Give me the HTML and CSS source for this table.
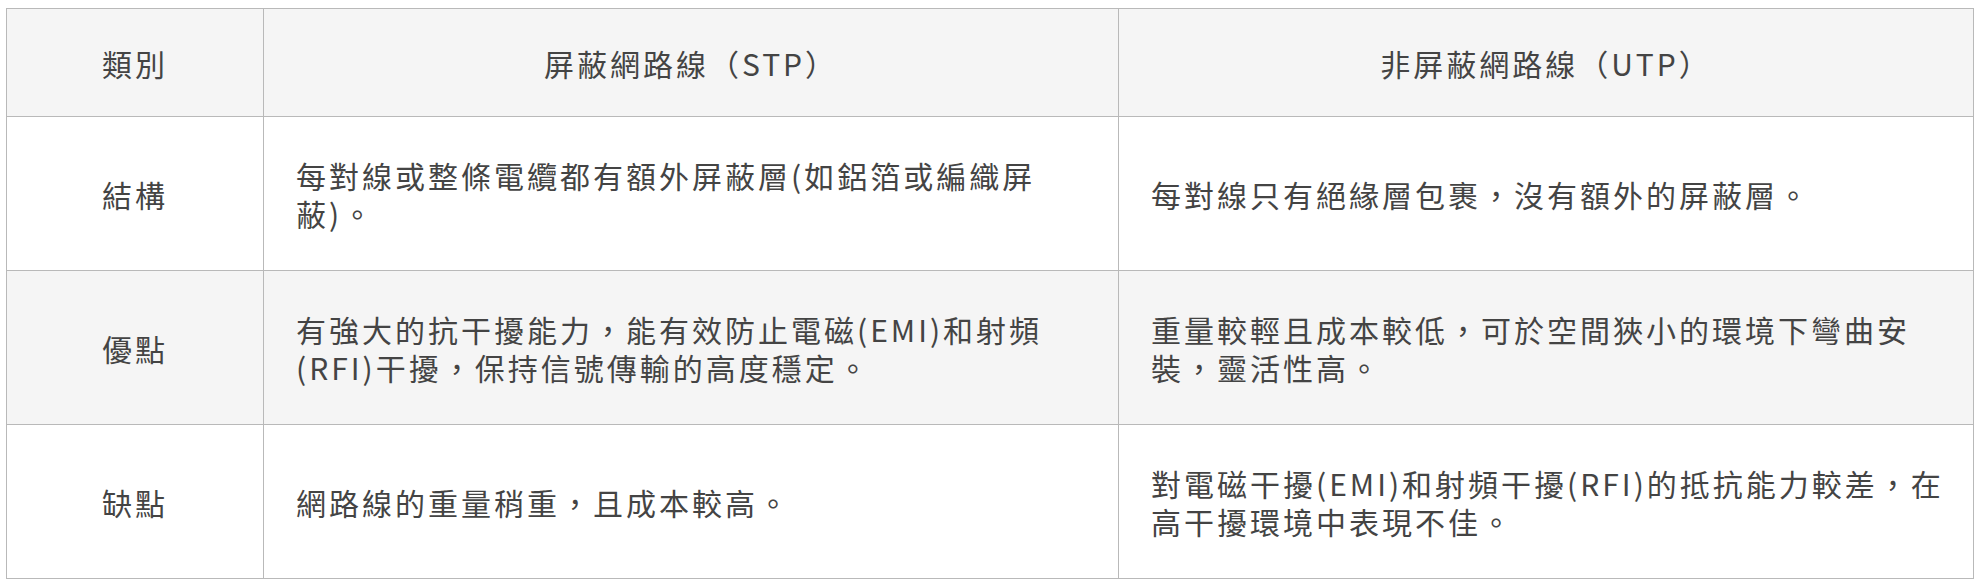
FILE: index.html
```html
<!DOCTYPE html>
<html lang="zh-Hant">
<head>
<meta charset="utf-8">
<title>STP vs UTP</title>
<link rel="stylesheet" href="styles.css">
</head>
<body>
<div class="wrap">
  <table class="cmp">
    <colgroup>
      <col class="col-cat">
      <col class="col-a">
      <col class="col-b">
    </colgroup>
    <thead>
      <tr class="head">
        <th>類別</th>
        <th>屏蔽網路線（STP）</th>
        <th>非屏蔽網路線（UTP）</th>
      </tr>
    </thead>
    <tbody>
      <tr class="odd">
        <td class="cat">結構</td>
        <td>每對線或整條電纜都有額外屏蔽層(如鋁箔或編織屏蔽)。</td>
        <td>每對線只有絕緣層包裹，沒有額外的屏蔽層。</td>
      </tr>
      <tr class="even">
        <td class="cat">優點</td>
        <td>有強大的抗干擾能力，能有效防止電磁(EMI)和射頻(RFI)干擾，保持信號傳輸的高度穩定。</td>
        <td>重量較輕且成本較低，可於空間狹小的環境下彎曲安裝，靈活性高。</td>
      </tr>
      <tr class="odd">
        <td class="cat">缺點</td>
        <td>網路線的重量稍重，且成本較高。</td>
        <td>對電磁干擾(EMI)和射頻干擾(RFI)的抵抗能力較差，在高干擾環境中表現不佳。</td>
      </tr>
    </tbody>
  </table>
</div>
</body>
</html>
```

FILE: styles.css
```css
html, body {
  margin: 0;
  padding: 0;
  background: #ffffff;
}

.wrap {
  padding: 8px 8px 0 6px;
}

.cmp {
  width: 100%;
  border-collapse: collapse;
  table-layout: fixed;
  font-family: "Noto Sans CJK TC", "Noto Sans", sans-serif;
  font-size: 30px;
  font-weight: 400;
  letter-spacing: 3px;
  line-height: 38px;
  color: #444444;
}

.col-cat { width: 257px; }
.col-a { width: 855px; }
.col-b { width: auto; }

.cmp th,
.cmp td {
  border: 1px solid #b9b9b9;
  vertical-align: middle;
}

.cmp th {
  font-weight: 400;
  text-align: center;
  height: 108px;
  padding: 0 32px;
  box-sizing: border-box;
}

.cmp td {
  text-align: left;
  padding: 0 22px 0 32px;
  height: 154px;
  box-sizing: border-box;
}

.cmp td.cat {
  text-align: center;
  padding: 0 32px;
}

.head,
.even {
  background: #f5f5f5;
}

.odd {
  background: #ffffff;
}
```
